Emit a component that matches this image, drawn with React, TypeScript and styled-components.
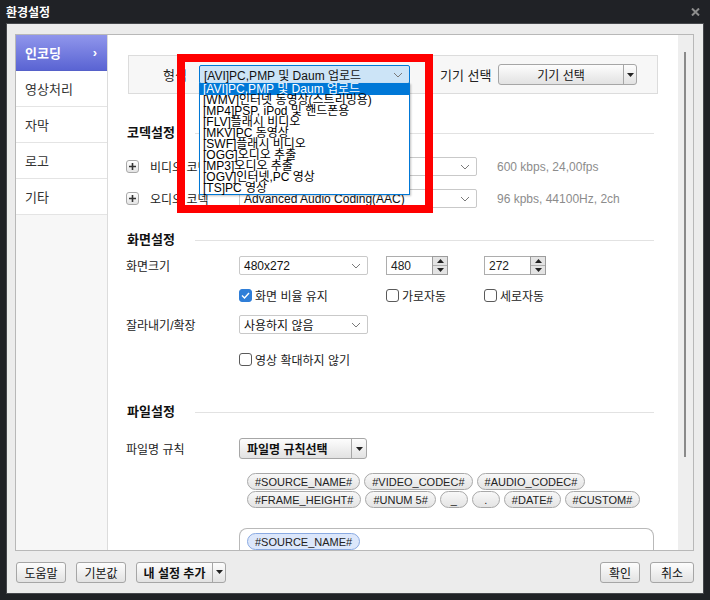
import React from 'react';
import styled, { createGlobalStyle, css } from 'styled-components';

const GlobalStyle = createGlobalStyle`
  html, body {
    margin: 0;
    padding: 0;
    background: #202226;
  }
  body {
    font-family: "Liberation Sans", "Noto Sans CJK KR", sans-serif;
    font-size: 12px;
    color: #222;
  }
  * {
    box-sizing: border-box;
  }
`;

const Window = styled.div`
  width: 710px;
  height: 600px;
  background: #202226;
  display: flex;
  flex-direction: column;
  overflow: hidden;
`;

const TitleBar = styled.div`
  height: 23px;
  flex: none;
  display: flex;
  align-items: center;
  justify-content: space-between;
  padding: 0 10px 0 6px;
  color: #fff;
  font-weight: bold;
  font-size: 12px;
`;

const Body = styled.div`
  flex: 1;
  margin: 0 6px 6px 6px;
  border: 1px solid #46484c;
  background: #ececec;
  display: flex;
  flex-direction: column;
  padding: 10px 9px 0 8px;
`;

const Panel = styled.div`
  height: 517px;
  flex: none;
  border: 1px solid #b8b8b8;
  display: flex;
  background: #fff;
`;

const Sidebar = styled.nav`
  width: 92px;
  flex: none;
  background: #f7f7f7;
  border-right: 1px solid #dcdcdc;
  display: flex;
  flex-direction: column;
`;

const NavItem = styled.div<{ $active?: boolean }>`
  height: 36px;
  display: flex;
  align-items: center;
  justify-content: space-between;
  padding: 0 10px 0 9px;
  background: #fff;
  border-bottom: 1px solid #e4e4e4;
  font-size: 13px;
  color: #333;
  ${(p) =>
    p.$active &&
    css`
      background: linear-gradient(#9096ec, #5a64d3);
      border-bottom-color: #5661c9;
      color: #fff;
      font-weight: bold;
    `}
`;

const Main = styled.div`
  flex: 1;
  display: flex;
  flex-direction: column;
  overflow: hidden;
`;

const Track = styled.div`
  width: 15px;
  flex: none;
  background: #eeeeee;
`;

const Thumb = styled.div`
  width: 2px;
  height: 405px;
  margin: 17px 0 0 6px;
  background: #8a8a8a;
`;

const TopBox = styled.div`
  margin: 20px 20px 0;
  height: 39px;
  flex: none;
  border: 1px solid #dcdcdc;
  background: #f7f7f7;
  display: flex;
  align-items: center;
  padding-left: 34px;
`;

const BoxLabel = styled.span<{ $w: number; $ml?: number }>`
  width: ${(p) => p.$w}px;
  margin-left: ${(p) => p.$ml ?? 0}px;
  font-size: 13px;
  color: #222;
  white-space: nowrap;
`;

const Select = styled.div<{ $w: number; $open?: boolean }>`
  position: relative;
  width: ${(p) => p.$w}px;
  height: 19px;
  flex: none;
  border: 1px solid #c9c9c9;
  border-radius: 2px;
  background: #fff;
  display: flex;
  align-items: center;
  justify-content: space-between;
  padding: 0 6px 0 4px;
  font-size: 12px;
  color: #111;
  white-space: nowrap;
  ${(p) =>
    p.$open &&
    css`
      background: #cce4f7;
      border-color: #0078d7;
    `}
`;

const DropList = styled.ul`
  position: absolute;
  top: 17px;
  left: -1px;
  width: 211px;
  margin: 0;
  padding: 0;
  list-style: none;
  background: #fff;
  border: 1px solid #0078d7;
  box-shadow: 1px 1px 2px rgba(0, 0, 0, 0.25);
  z-index: 6;
`;

const DropItem = styled.li<{ $active?: boolean }>`
  height: 11px;
  line-height: 11px;
  padding-left: 3px;
  font-size: 12px;
  color: #000;
  white-space: nowrap;
  ${(p) =>
    p.$active &&
    css`
      background: #0078d7;
      color: #fff;
    `}
`;

const Highlight = styled.div`
  position: absolute;
  left: -23px;
  top: -12px;
  width: 256px;
  height: 159px;
  border: 8px solid #ff0000;
  z-index: 5;
  pointer-events: none;
`;

const Button = styled.div<{ $w: number; $bold?: boolean }>`
  width: ${(p) => p.$w}px;
  height: 21px;
  flex: none;
  border: 1px solid #a6a6a6;
  border-radius: 3px;
  background: linear-gradient(#fdfdfd, #e2e2e2);
  display: flex;
  align-items: stretch;
  font-size: 12px;
  color: #111;
  font-weight: ${(p) => (p.$bold ? 'bold' : 'normal')};
  white-space: nowrap;
`;

const ButtonText = styled.span`
  flex: 1;
  display: flex;
  align-items: center;
  justify-content: center;
`;

const ButtonLeft = styled(ButtonText)`
  justify-content: flex-start;
  padding-left: 7px;
`;

const ButtonArrow = styled.span<{ $w: number }>`
  width: ${(p) => p.$w}px;
  flex: none;
  border-left: 1px solid #a6a6a6;
  display: flex;
  align-items: center;
  justify-content: center;
`;

const SectionHead = styled.div<{ $mt: number }>`
  margin: ${(p) => p.$mt}px 24px 0 19px;
  height: 18px;
  flex: none;
  display: flex;
  align-items: center;
  font-weight: bold;
  font-size: 13px;
  color: #111;
`;

const Rule = styled.div`
  flex: 1;
  height: 1px;
  margin: 4px 0 0 20px;
  background: #e2e2e2;
`;

const CodecRow = styled.div<{ $mt: number }>`
  margin-top: ${(p) => p.$mt}px;
  height: 18px;
  flex: none;
  padding-left: 18px;
  display: grid;
  grid-template-columns: 24px 89px 238px auto;
  align-items: center;
  font-size: 12px;
`;

const FormRow = styled.div<{ $mt: number; $h: number }>`
  margin-top: ${(p) => p.$mt}px;
  height: ${(p) => p.$h}px;
  flex: none;
  padding-left: 18px;
  display: grid;
  grid-template-columns: 113px 147px 98px auto;
  align-items: center;
  font-size: 12px;
  white-space: nowrap;
`;

const Info = styled.span`
  padding-left: 20px;
  color: #8c8c8c;
  font-size: 12px;
  white-space: nowrap;
`;

const PlusButton = styled.span`
  width: 13px;
  height: 13px;
  border: 1px solid #a9a9a9;
  border-radius: 3px;
  background: linear-gradient(#ffffff, #e4e4e4);
  display: flex;
  align-items: center;
  justify-content: center;
`;

const Spin = styled.div`
  width: 62px;
  height: 19px;
  display: flex;
`;

const SpinInput = styled.div`
  flex: 1;
  border: 1px solid #adadad;
  border-right: none;
  background: #fff;
  display: flex;
  align-items: center;
  padding-left: 4px;
  font-size: 12px;
`;

const SpinButtons = styled.div`
  width: 16px;
  border: 1px solid #9c9c9c;
  background: #e4e4e4;
  display: flex;
  flex-direction: column;
`;

const SpinHalf = styled.span<{ $top?: boolean }>`
  flex: 1;
  display: flex;
  align-items: center;
  justify-content: center;
  border-bottom: ${(p) => (p.$top ? '1px solid #b0b0b0' : 'none')};
`;

const Check = styled.label`
  display: flex;
  align-items: center;
  gap: 3px;
  font-size: 12px;
  color: #222;
`;

const Box = styled.span<{ $checked?: boolean }>`
  width: 13px;
  height: 13px;
  flex: none;
  border: 1px solid #5a5a5a;
  border-radius: 3px;
  background: #fff;
  display: flex;
  align-items: center;
  justify-content: center;
  ${(p) =>
    p.$checked &&
    css`
      background: #2f7ed8;
      border-color: #2f7ed8;
    `}
`;

const Tags = styled.div`
  margin-top: 14px;
  padding-left: 139px;
  display: flex;
  flex-direction: column;
  gap: 1px;
  flex: none;
`;

const TagRow = styled.div`
  display: flex;
  gap: 4px;
`;

const Tag = styled.span<{ $selected?: boolean }>`
  height: 17px;
  min-width: 28px;
  padding: 0 7px;
  border: 1px solid #a8a8a8;
  border-radius: 9px;
  background: linear-gradient(#f8f8f8, #e4e4e4);
  display: inline-flex;
  align-items: center;
  justify-content: center;
  font-size: 11px;
  color: #222;
  white-space: nowrap;
  ${(p) =>
    p.$selected &&
    css`
      background: #dce7fb;
      border-color: #8aaae2;
    `}
`;

const NameBox = styled.div`
  margin: 20px 0 0 131px;
  width: 415px;
  height: 40px;
  flex: none;
  border: 1px solid #b9b9b9;
  border-bottom: none;
  border-radius: 8px 8px 0 0;
  padding: 4px 7px;
  display: flex;
  align-items: flex-start;
`;

const Footer = styled.div`
  height: 42px;
  flex: none;
  display: flex;
  align-items: center;
  gap: 10px;
  padding: 0 0 0 1px;
`;

const Spacer = styled.div`
  flex: 1;
`;

const Chevron = () => (
  <svg width="10" height="6" viewBox="0 0 10 6">
    <polyline points="1,1 5,5 9,1" fill="none" stroke="#7a7a7a" strokeWidth="1" />
  </svg>
);

const Caret = () => (
  <svg width="7" height="4" viewBox="0 0 7 4">
    <polygon points="0,0 7,0 3.5,4" fill="#222" />
  </svg>
);

const Tri = ({ up }: { up?: boolean }) => (
  <svg width="7" height="4" viewBox="0 0 7 4">
    <polygon points={up ? '0,4 7,4 3.5,0' : '0,0 7,0 3.5,4'} fill="#222" />
  </svg>
);

const PlusIcon = () => (
  <svg width="7" height="7" viewBox="0 0 7 7">
    <path d="M3.5 0v7M0 3.5h7" stroke="#333" strokeWidth="1.6" />
  </svg>
);

const Tick = () => (
  <svg width="9" height="7" viewBox="0 0 9 7">
    <polyline points="1,3.5 3.5,6 8,1" fill="none" stroke="#fff" strokeWidth="1.4" />
  </svg>
);

const CloseIcon = () => (
  <svg width="9" height="8" viewBox="0 0 9 8">
    <path d="M1 0.5l7 7M8 0.5l-7 7" stroke="#8d8d8d" strokeWidth="2" />
  </svg>
);

const formats = [
  '[AVI]PC,PMP 및 Daum 업로드',
  '[WMV]인터넷 동영상(스트리밍용)',
  '[MP4]PSP, iPod 및 핸드폰용',
  '[FLV]플래시 비디오',
  '[MKV]PC 동영상',
  '[SWF]플래시 비디오',
  '[OGG]오디오 추출',
  '[MP3]오디오 추출',
  '[OGV]인터넷,PC 영상',
  '[TS]PC 영상',
];

const menu = ['인코딩', '영상처리', '자막', '로고', '기타'];

function SpinBox({ value }: { value: string }) {
  return (
    <Spin>
      <SpinInput>{value}</SpinInput>
      <SpinButtons>
        <SpinHalf $top>
          <Tri up />
        </SpinHalf>
        <SpinHalf>
          <Tri />
        </SpinHalf>
      </SpinButtons>
    </Spin>
  );
}

export default function App() {
  return (
    <Window>
      <GlobalStyle />
      <TitleBar>
        <span>환경설정</span>
        <CloseIcon />
      </TitleBar>
      <Body>
        <Panel>
          <Sidebar>
            {menu.map((m, i) => (
              <NavItem key={m} $active={i === 0}>
                <span>{m}</span>
                {i === 0 && <span>›</span>}
              </NavItem>
            ))}
          </Sidebar>
          <Main>
            <TopBox>
              <BoxLabel $w={36}>형식</BoxLabel>
              <Select $w={211} $open>
                <span>{formats[0]}</span>
                <Chevron />
                <DropList>
                  {formats.map((f, i) => (
                    <DropItem key={f} $active={i === 0}>
                      {f}
                    </DropItem>
                  ))}
                </DropList>
                <Highlight />
              </Select>
              <BoxLabel $w={58} $ml={30}>
                기기 선택
              </BoxLabel>
              <Button $w={139}>
                <ButtonText>기기 선택</ButtonText>
                <ButtonArrow $w={13}>
                  <Caret />
                </ButtonArrow>
              </Button>
            </TopBox>

            <SectionHead $mt={28}>
              코덱설정
              <Rule />
            </SectionHead>
            <CodecRow $mt={17}>
              <PlusButton>
                <PlusIcon />
              </PlusButton>
              <span>비디오 코덱</span>
              <Select $w={238}>
                <span />
                <Chevron />
              </Select>
              <Info>600 kbps, 24,00fps</Info>
            </CodecRow>
            <CodecRow $mt={14}>
              <PlusButton>
                <PlusIcon />
              </PlusButton>
              <span>오디오 코덱</span>
              <Select $w={238}>
                <span>Advanced Audio Coding(AAC)</span>
                <Chevron />
              </Select>
              <Info>96 kpbs, 44100Hz, 2ch</Info>
            </CodecRow>

            <SectionHead $mt={22}>
              화면설정
              <Rule />
            </SectionHead>
            <FormRow $mt={9} $h={19}>
              <span>화면크기</span>
              <Select $w={129}>
                <span>480x272</span>
                <Chevron />
              </Select>
              <SpinBox value="480" />
              <SpinBox value="272" />
            </FormRow>
            <FormRow $mt={12} $h={14}>
              <span />
              <Check>
                <Box $checked>
                  <Tick />
                </Box>
                화면 비율 유지
              </Check>
              <Check>
                <Box />
                가로자동
              </Check>
              <Check>
                <Box />
                세로자동
              </Check>
            </FormRow>
            <FormRow $mt={14} $h={19}>
              <span>잘라내기/확장</span>
              <Select $w={129}>
                <span>사용하지 않음</span>
                <Chevron />
              </Select>
            </FormRow>
            <FormRow $mt={17} $h={14}>
              <span />
              <Check>
                <Box />
                영상 확대하지 않기
              </Check>
            </FormRow>

            <SectionHead $mt={36}>
              파일설정
              <Rule />
            </SectionHead>
            <FormRow $mt={19} $h={21}>
              <span>파일명 규칙</span>
              <Button $w={128} $bold>
                <ButtonLeft>파일명 규칙선택</ButtonLeft>
                <ButtonArrow $w={15}>
                  <Caret />
                </ButtonArrow>
              </Button>
            </FormRow>
            <Tags>
              <TagRow>
                <Tag>#SOURCE_NAME#</Tag>
                <Tag>#VIDEO_CODEC#</Tag>
                <Tag>#AUDIO_CODEC#</Tag>
              </TagRow>
              <TagRow>
                <Tag>#FRAME_HEIGHT#</Tag>
                <Tag>#UNUM 5#</Tag>
                <Tag>_</Tag>
                <Tag>.</Tag>
                <Tag>#DATE#</Tag>
                <Tag>#CUSTOM#</Tag>
              </TagRow>
            </Tags>
            <NameBox>
              <Tag $selected>#SOURCE_NAME#</Tag>
            </NameBox>
          </Main>
          <Track>
            <Thumb />
          </Track>
        </Panel>
        <Footer>
          <Button $w={50}>
            <ButtonText>도움말</ButtonText>
          </Button>
          <Button $w={50}>
            <ButtonText>기본값</ButtonText>
          </Button>
          <Button $w={90} $bold>
            <ButtonText>내 설정 추가</ButtonText>
            <ButtonArrow $w={13}>
              <Caret />
            </ButtonArrow>
          </Button>
          <Spacer />
          <Button $w={40}>
            <ButtonText>확인</ButtonText>
          </Button>
          <Button $w={44}>
            <ButtonText>취소</ButtonText>
          </Button>
        </Footer>
      </Body>
    </Window>
  );
}
